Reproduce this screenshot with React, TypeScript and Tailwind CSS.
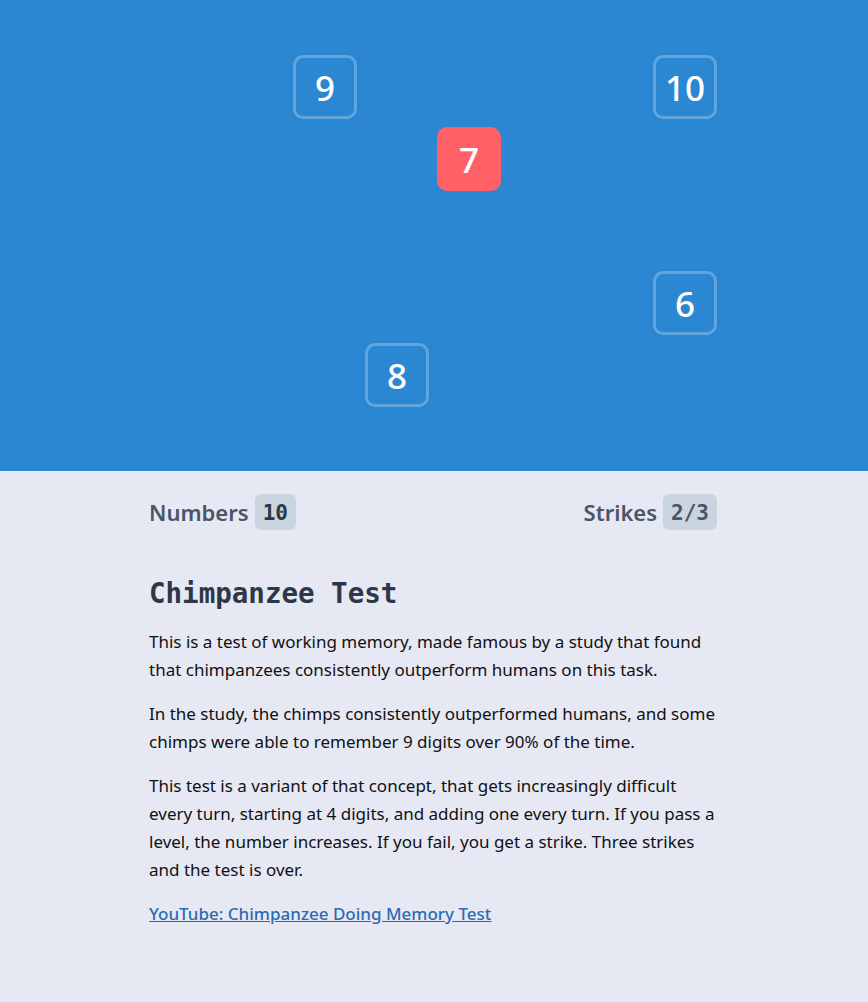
import React from "react";

type Tile = { n: number; col: number; row: number; active?: boolean };

const tiles: Tile[] = [
  { n: 9, col: 2, row: 0 },
  { n: 10, col: 7, row: 0 },
  { n: 7, col: 4, row: 1, active: true },
  { n: 6, col: 7, row: 3 },
  { n: 8, col: 3, row: 4 },
];

const COLS = 8;
const ROWS = 5;

export default function App() {
  const cells = [];
  for (let r = 0; r < ROWS; r++) {
    for (let c = 0; c < COLS; c++) {
      const t = tiles.find((x) => x.col === c && x.row === r);
      cells.push(
        <div key={`${r}-${c}`} className="w-16 h-16">
          {t && (
            <div
              className={
                t.active
                  ? "w-16 h-16 rounded-[10px] bg-[#ff6167] flex items-center justify-center text-white text-[35px] font-medium pt-[3px]"
                  : "w-16 h-16 rounded-[10px] border-[3px] border-white/25 flex items-center justify-center text-white text-[35px] font-medium pt-[3px]"
              }
            >
              {t.n}
            </div>
          )}
        </div>
      );
    }
  }

  return (
    <div
      className="min-h-[1002px] bg-[#e6e8f4]"
      style={{ fontFamily: '"Noto Sans", "Open Sans", sans-serif' }}
    >
      {/* Board */}
      <section className="h-[471px] bg-[#2b87d1] pt-[55px]">
        <div className="w-[568px] mx-auto -translate-x-px grid grid-cols-8 gap-2">{cells}</div>
      </section>

      {/* Info */}
      <section className="w-[570px] mx-auto pr-[2px] pt-[23px] pb-12">
        <div className="flex items-center justify-between text-[#4a5568] text-[22px] font-semibold">
          <div className="flex items-center gap-[6px]">
            <span>Numbers</span>
            <span className="h-9 px-2 pt-[4px] rounded-md bg-[#cbd5e0] flex items-center font-bold text-[21px] text-[#2d3748] font-['DejaVu_Sans_Mono',monospace]">
              10
            </span>
          </div>
          <div className="flex items-center gap-[6px]">
            <span>Strikes</span>
            <span className="h-9 px-2 pt-[4px] rounded-md bg-[#cbd5e0] flex items-center font-bold text-[21px] text-[#4a5568] font-['DejaVu_Sans_Mono',monospace]">
              2/3
            </span>
          </div>
        </div>

        <h1 className="mt-[43px] text-[27.5px] font-bold text-[#2d3748] font-['DejaVu_Sans_Mono',monospace]">
          Chimpanzee Test
        </h1>

        <div className="mt-[14px] text-[17px] leading-7 text-[#111]">
          <p>
            This is a test of working memory, made famous by a study that found
            that chimpanzees consistently outperform humans on this task.
          </p>
          <p className="mt-[16px]">
            In the study, the chimps consistently outperformed humans, and some
            chimps were able to remember 9 digits over 90% of the time.
          </p>
          <p className="mt-[16px]">
            This test is a variant of that concept, that gets increasingly
            difficult every turn, starting at 4 digits, and adding one every
            turn. If you pass a level, the number increases. If you fail, you
            get a strike. Three strikes and the test is over.
          </p>
          <p className="mt-[16px]">
            <a href="#" className="underline font-medium text-[#2b6cb0]">
              YouTube: Chimpanzee Doing Memory Test
            </a>
          </p>
        </div>
      </section>
    </div>
  );
}
